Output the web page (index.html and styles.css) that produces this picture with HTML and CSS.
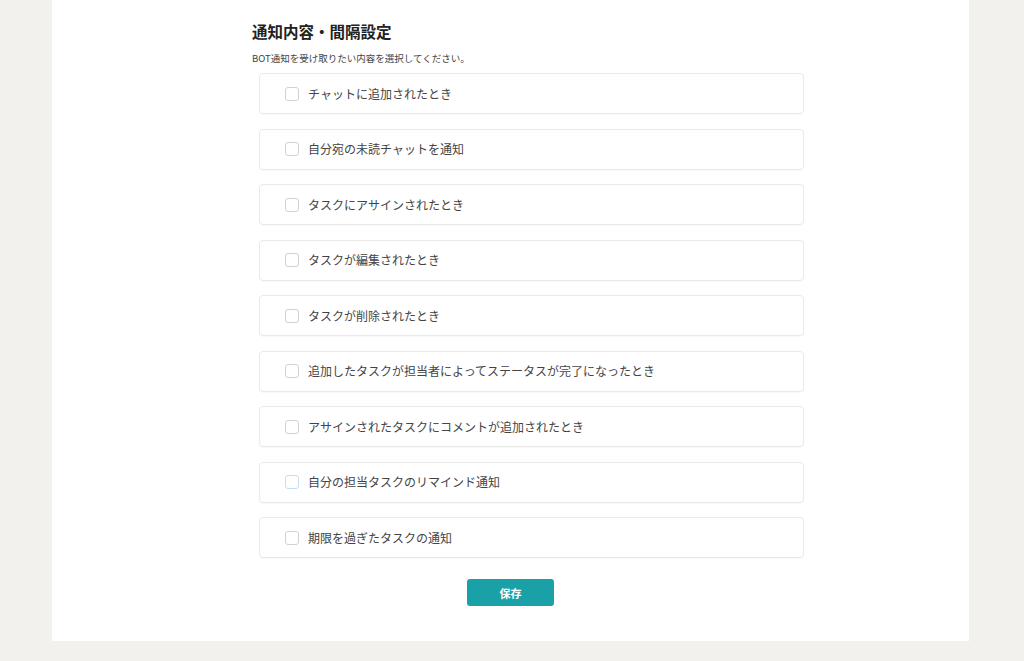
FILE: index.html
```html
<!DOCTYPE html>
<html lang="ja">
<head>
<meta charset="utf-8">
<title>通知内容・間隔設定</title>
<link rel="stylesheet" href="styles.css">
</head>
<body>
<main class="panel">
  <section class="settings">
    <h1 class="title">通知内容・間隔設定</h1>
    <p class="lead">BOT通知を受け取りたい内容を選択してください。</p>
    <ul class="options">
      <li class="option"><span class="box"></span><span class="label">チャットに追加されたとき</span></li>
      <li class="option"><span class="box"></span><span class="label">自分宛の未読チャットを通知</span></li>
      <li class="option"><span class="box"></span><span class="label">タスクにアサインされたとき</span></li>
      <li class="option"><span class="box"></span><span class="label">タスクが編集されたとき</span></li>
      <li class="option"><span class="box"></span><span class="label">タスクが削除されたとき</span></li>
      <li class="option"><span class="box"></span><span class="label">追加したタスクが担当者によってステータスが完了になったとき</span></li>
      <li class="option"><span class="box"></span><span class="label">アサインされたタスクにコメントが追加されたとき</span></li>
      <li class="option"><span class="box box-focus"></span><span class="label">自分の担当タスクのリマインド通知</span></li>
      <li class="option"><span class="box"></span><span class="label">期限を過ぎたタスクの通知</span></li>
    </ul>
  </section>
  <div class="actions">
    <button class="save" type="button">保存</button>
  </div>
</main>
</body>
</html>
```

FILE: styles.css
```css
html, body {
  margin: 0;
  padding: 0;
}

body {
  background: #f2f1ed;
  font-family: "Noto Sans CJK JP", "Noto Sans", sans-serif;
  color: #333;
  height: 661px;
  overflow: hidden;
}

.panel {
  margin-left: 52px;
  width: 917px;
  height: 641px;
  background: #ffffff;
  box-sizing: border-box;
  padding-top: 19px;
}

.settings {
  padding-left: 200px;
}

.title {
  margin: 0;
  font-size: 15.5px;
  line-height: 24px;
  font-weight: 700;
  color: #222;
}

.lead {
  margin: 8px 0 0;
  font-size: 9.5px;
  line-height: 14px;
  color: #444;
}

.options {
  list-style: none;
  margin: 8px 0 0 7px;
  padding: 0;
  display: flex;
  flex-direction: column;
  gap: 14.5px;
}

.option {
  box-sizing: border-box;
  width: 545px;
  height: 41px;
  border: 1px solid #e9e9e9;
  border-radius: 4px;
  box-shadow: 0 1px 1px rgba(0, 0, 0, 0.03);
  display: flex;
  align-items: center;
  padding-left: 25px;
}

.box {
  box-sizing: border-box;
  width: 14px;
  height: 14px;
  border: 1.5px solid #cfd3d8;
  border-radius: 3px;
  background: #fff;
  flex: none;
}

.box-focus {
  border-color: #c6dcf3;
}

.label {
  margin-left: 9px;
  font-size: 12px;
  line-height: 16px;
  color: #444;
}

.actions {
  display: flex;
  justify-content: center;
  margin-top: 21px;
}

.save {
  width: 87px;
  height: 27px;
  border: none;
  border-radius: 3px;
  background: #1aa0a7;
  color: #fff;
  font-family: inherit;
  font-size: 11px;
  font-weight: 700;
  padding: 0;
  cursor: pointer;
}
```
